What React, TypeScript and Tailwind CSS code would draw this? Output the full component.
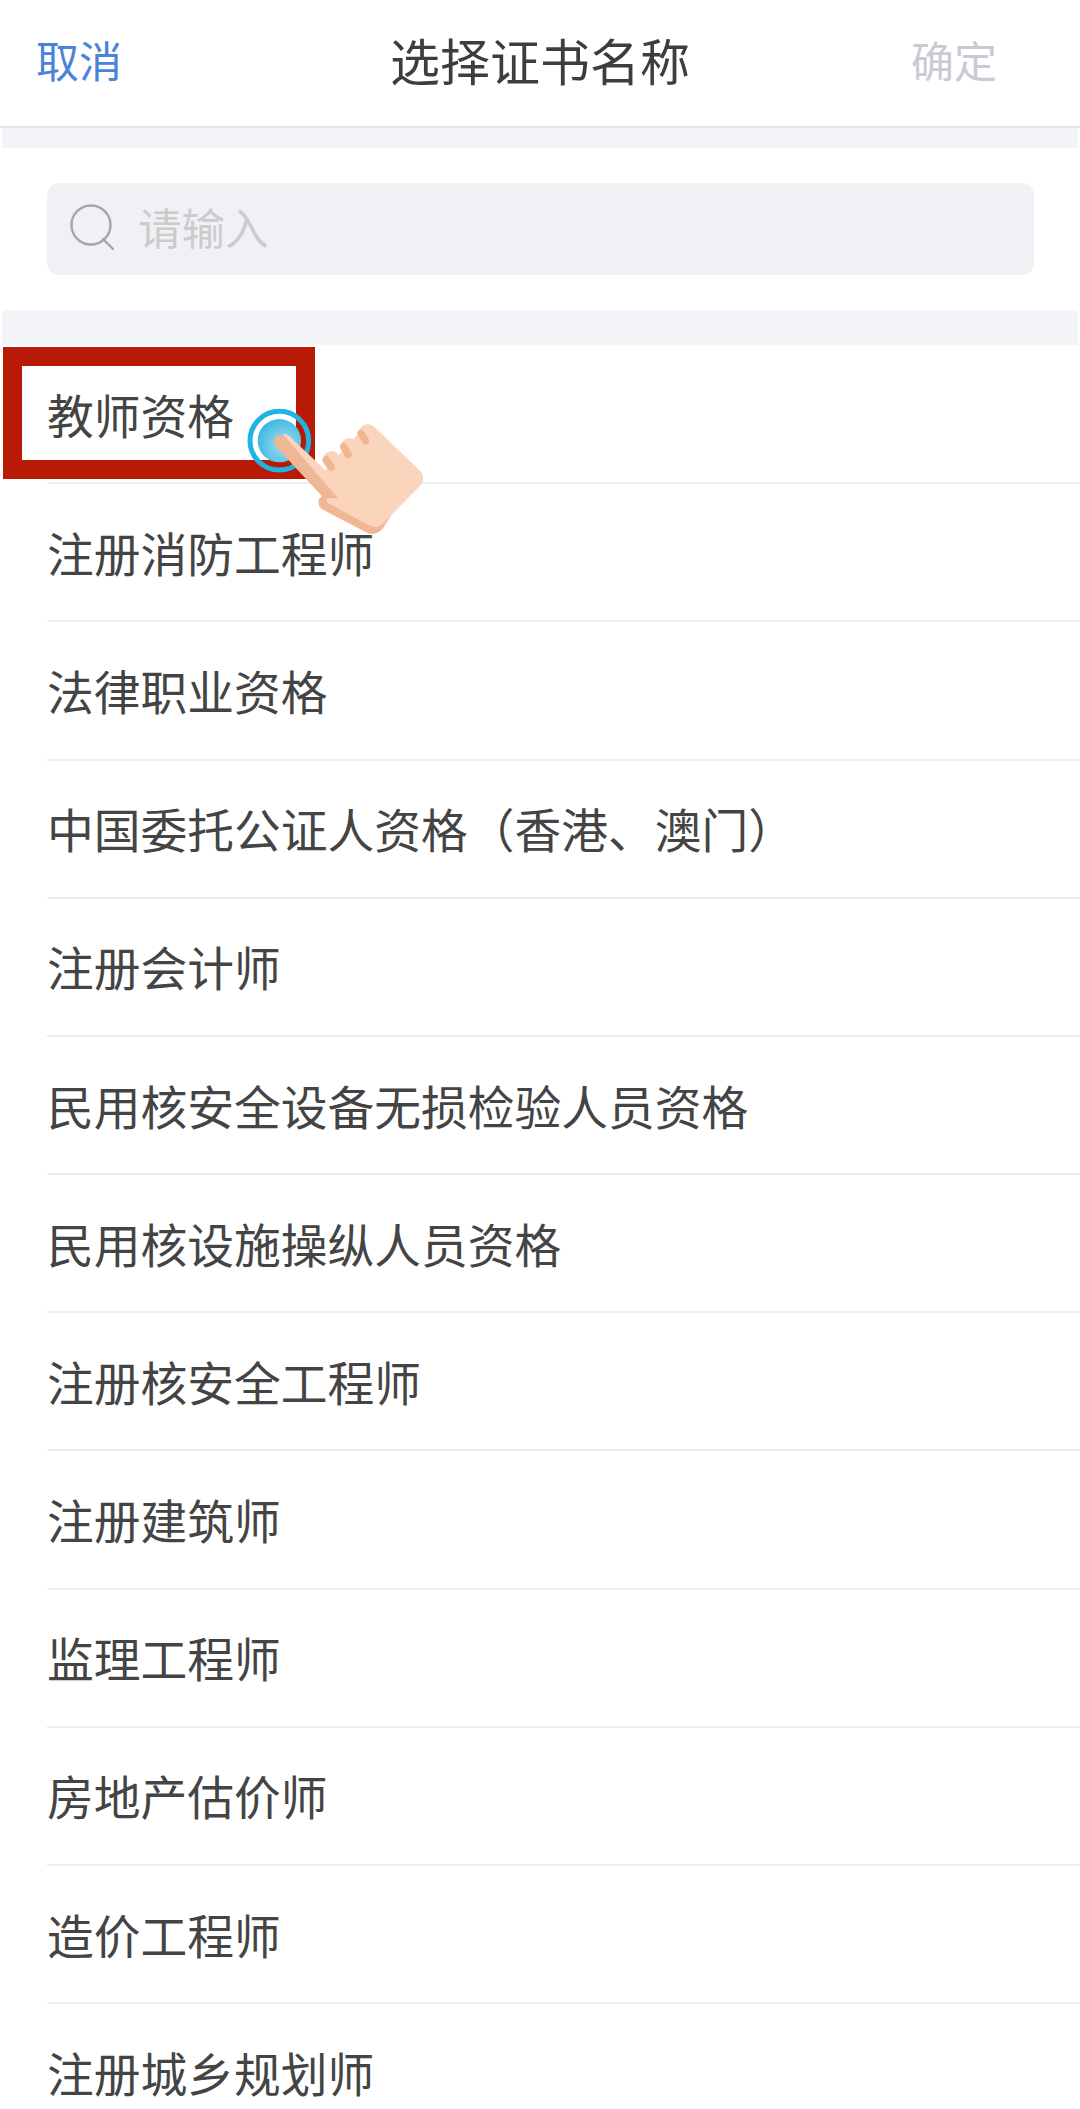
import React from 'react';

const certificates = [
  '教师资格',
  '注册消防工程师',
  '法律职业资格',
  '中国委托公证人资格（香港、澳门）',
  '注册会计师',
  '民用核安全设备无损检验人员资格',
  '民用核设施操纵人员资格',
  '注册核安全工程师',
  '注册建筑师',
  '监理工程师',
  '房地产估价师',
  '造价工程师',
  '注册城乡规划师',
];

const TapHand: React.FC = () => (
  <svg className="absolute left-[230px] top-[390px] h-[160px] w-[210px]" viewBox="0 0 630 480" fill="none">
    <defs>
      <radialGradient id="tap" cx="0.6" cy="0.6" r="0.75">
        <stop offset="0" stopColor="#a6deef" />
        <stop offset="1" stopColor="#27b2e0" />
      </radialGradient>
    </defs>
    <circle cx="148" cy="152" r="88" stroke="#1fb4e2" strokeWidth="15" />
    <circle cx="148" cy="152" r="65" fill="url(#tap)" />
    {/* palm shadow */}
    <path d="M268 325 Q258 350 285 362 L405 425 Q432 442 458 416 L500 350 L330 280 Z" fill="#f0b797" />
    {/* finger shadow */}
    <path d="M152 155 L306 322" stroke="#f0b797" strokeWidth="40" strokeLinecap="round" />
    {/* palm and finger */}
    <path
      d="M158 133 Q170 130 180 140 L285 240 L410 105 Q420 100 432 110 L568 240 Q590 264 570 288 L455 405 Q438 418 415 405 L295 340 Q285 335 292 325 L325 325 Z"
      fill="#fbd5bb"
    />
    {/* finger bumps */}
    <circle cx="305" cy="210" r="27" fill="#fbd5bb" />
    <circle cx="358" cy="171" r="27" fill="#fbd5bb" />
    <circle cx="412" cy="130" r="27" fill="#fbd5bb" />
    <path d="M289 209 L304 232" stroke="#f0b797" strokeWidth="22" strokeLinecap="round" />
    <path d="M341 170 L355 194" stroke="#f0b797" strokeWidth="22" strokeLinecap="round" />
    <path d="M393 130 L407 153" stroke="#f0b797" strokeWidth="22" strokeLinecap="round" />
  </svg>
);

const App: React.FC = () => {
  return (
    <div
      className="relative h-[2109px] w-[1080px] overflow-hidden bg-white text-[#444444]"
      style={{ fontFamily: '"Noto Sans CJK SC", "Noto Sans", sans-serif' }}
    >
      {/* nav bar */}
      <div className="grid h-[128px] grid-cols-[1fr_auto_1fr] items-center border-b-2 border-[#e3e4ea] pb-[7px]">
        <span className="pl-[36px] text-[43px] text-[#4a84d9]">取消</span>
        <span className="text-[50px] text-[#3d3d3d]">选择证书名称</span>
        <span className="pr-[83px] text-right text-[43px] text-[#c9cbd3]">确定</span>
      </div>

      <div className="mx-[2px] h-[20px] bg-[#f4f5f9]" />

      {/* search */}
      <div className="py-[35px] pl-[47px] pr-[46px]">
        <div className="flex h-[92px] items-center gap-[24px] rounded-[12px] bg-[#f0f1f5] pl-[23px]">
          <svg className="mb-[4px] h-[46px] w-[44px]" viewBox="0 0 44 46" fill="none" stroke="#a4a5ad" strokeWidth="2.4">
            <circle cx="21" cy="21" r="19.5" />
            <path d="M33 35 L43 45" strokeLinecap="round" />
          </svg>
          <span className="pb-[4px] text-[43.5px] text-[#cccccc]">请输入</span>
        </div>
      </div>

      <div className="mx-[2px] h-[35px] bg-[#f4f5f9]" />

      {/* list */}
      <ul className="mt-[1px]">
        {certificates.map((name) => (
          <li key={name} className="pl-[47px]">
            <div className="flex h-[138.18px] items-center border-b-2 border-[#ececf1] text-[46.75px] leading-none">
              {name}
            </div>
          </li>
        ))}
      </ul>

      {/* tutorial highlight */}
      <div className="absolute left-[3px] top-[347px] h-[132px] w-[312px] border-[19.5px] border-[#b91a08]" />
      <TapHand />
    </div>
  );
};

export default App;
